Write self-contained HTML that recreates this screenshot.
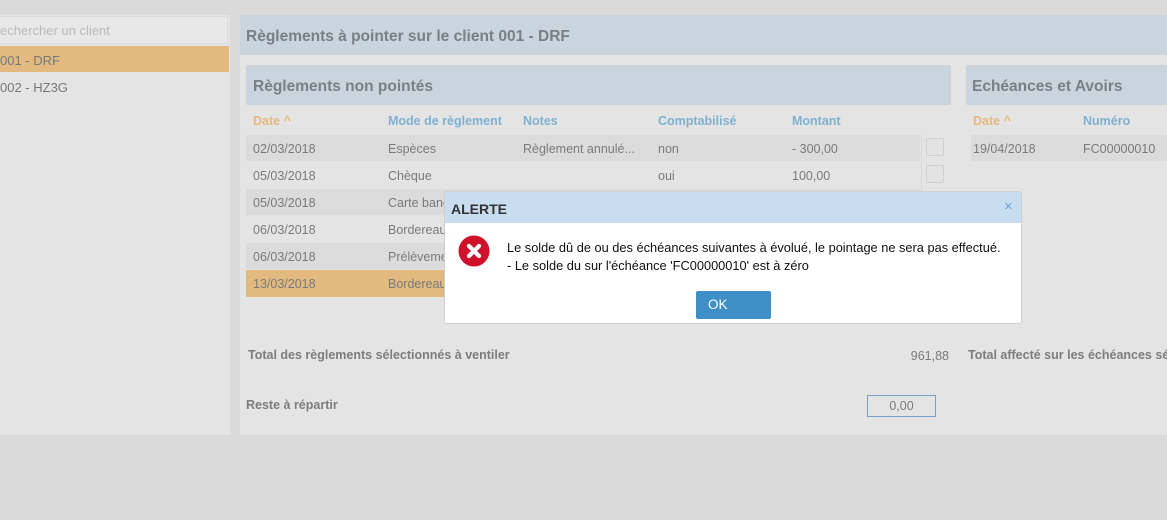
<!DOCTYPE html>
<html><head><meta charset="utf-8"><style>
*{margin:0;padding:0;box-sizing:border-box}
html,body{width:1167px;height:520px;overflow:hidden}
body{background:#dadada;font-family:"Liberation Sans",sans-serif;position:relative;color:#7a7a7a;font-size:12.5px}
#w{position:absolute;left:0;top:0;width:1167px;height:520px;overflow:hidden}
.a{position:absolute;white-space:nowrap}
.h{font-size:15.5px;font-weight:bold;color:#7a7f85}
.ch{color:#7fb0cf;font-weight:bold;font-size:12.5px}
.or{color:#e5b77a}
.cb{position:absolute;width:18px;height:18px;background:#e3e3e3;border:1px solid #cfcfcf;border-radius:2px}
</style></head><body><div id="w">
<div class="a" style="left:0;top:15px;width:230px;height:420px;background:#e4e4e4"></div>
<div class="a" style="left:0;top:16px;width:228px;height:28px;background:#e8e8e8;border:1px solid #d6dde3;border-left:none"></div>
<div class="a" style="left:0;top:23px;color:#b9b9b9;font-size:13px">echercher un client</div>
<div class="a" style="left:0;top:46px;width:229px;height:26px;background:#e2ba80"></div>
<div class="a" style="left:0;top:53px;font-size:13px;color:#777">001 - DRF</div>
<div class="a" style="left:0;top:80px;font-size:13px;color:#777">002 - HZ3G</div>
<div class="a" style="left:240px;top:15px;width:927px;height:420px;background:#e4e4e4"></div>
<div class="a" style="left:240px;top:15px;width:927px;height:40px;background:#c9d4dd"></div>
<div class="a h" style="left:246px;top:28px">Règlements à pointer sur le client 001 - DRF</div>
<div class="a" style="left:246px;top:65px;width:705px;height:40px;background:#c9d4dd;border-radius:2px"></div>
<div class="a h" style="left:253px;top:78px">Règlements non pointés</div>
<div class="a" style="left:966px;top:65px;width:201px;height:40px;background:#c9d4dd;border-radius:2px"></div>
<div class="a h" style="left:972px;top:78px">Echéances et Avoirs</div>
<div class="a ch or" style="left:253px;top:114px">Date ^</div>
<div class="a ch" style="left:388px;top:114px">Mode de règlement</div>
<div class="a ch" style="left:523px;top:114px">Notes</div>
<div class="a ch" style="left:658px;top:114px">Comptabilisé</div>
<div class="a ch" style="left:792px;top:114px">Montant</div>
<div class="a ch or" style="left:973px;top:114px">Date ^</div>
<div class="a ch" style="left:1083px;top:114px">Numéro</div>
<div class="a" style="left:921px;top:135px;width:1px;height:160px;background:#d8d8d8"></div>
<div class="a" style="left:246px;top:135px;width:674px;height:26px;background:#dbdbdb"></div>
<div class="a" style="left:246px;top:189px;width:674px;height:26px;background:#dbdbdb"></div>
<div class="a" style="left:246px;top:243px;width:674px;height:26px;background:#dbdbdb"></div>
<div class="a" style="left:246px;top:270px;width:674px;height:27px;background:#e2ba80"></div>
<div class="a" style="left:253px;top:142px">02/03/2018</div><div class="a" style="left:388px;top:142px">Espèces</div><div class="a" style="left:523px;top:142px">Règlement annulé...</div><div class="a" style="left:658px;top:142px">non</div><div class="a" style="left:792px;top:142px">- 300,00</div>
<div class="a" style="left:253px;top:169px">05/03/2018</div><div class="a" style="left:388px;top:169px">Chèque</div><div class="a" style="left:658px;top:169px">oui</div><div class="a" style="left:792px;top:169px">100,00</div>
<div class="a" style="left:253px;top:196px">05/03/2018</div><div class="a" style="left:388px;top:196px">Carte bancaire</div>
<div class="a" style="left:253px;top:223px">06/03/2018</div><div class="a" style="left:388px;top:223px">Bordereau</div>
<div class="a" style="left:253px;top:250px">06/03/2018</div><div class="a" style="left:388px;top:250px">Prélèvement</div>
<div class="a" style="left:253px;top:277px">13/03/2018</div><div class="a" style="left:388px;top:277px">Bordereau</div>
<div class="cb" style="left:926px;top:138px"></div>
<div class="cb" style="left:926px;top:165px"></div>
<div class="a" style="left:971px;top:135px;width:196px;height:26px;background:#dbdbdb"></div>
<div class="a" style="left:973px;top:142px">19/04/2018</div><div class="a" style="left:1083px;top:142px">FC00000010</div>
<div class="a" style="left:248px;top:348px;font-weight:bold;color:#7d7d7d">Total des règlements sélectionnés à ventiler</div>
<div class="a" style="left:893px;top:349px;width:56px;text-align:right">961,88</div>
<div class="a" style="left:968px;top:348px;width:199px;overflow:hidden;font-weight:bold;color:#7d7d7d">Total affecté sur les échéances sélectionnées</div>
<div class="a" style="left:246px;top:398px;font-weight:bold;color:#7d7d7d">Reste à répartir</div>
<div class="a" style="left:867px;top:395px;width:69px;height:22px;border:1px solid #7aa0c8;text-align:center;line-height:21px">0,00</div>
<div class="a" style="left:444px;top:191px;width:578px;height:133px;background:#fff;border:1px solid #cfcfcf;border-radius:3px;overflow:hidden">
 <div style="height:31px;background:#c8ddf0;position:relative">
  <div class="a" style="left:6px;top:9px;font-weight:bold;font-size:14px;color:#333">ALERTE</div>
  <div class="a" style="left:559px;top:6px;font-size:15px;color:#6aa4d6">×</div>
 </div>
 <svg class="a" style="left:13px;top:43px" width="32" height="32" viewBox="0 0 32 32"><circle cx="16" cy="16" r="15.5" fill="#d0112b"/><path d="M11 11L21 21M21 11L11 21" stroke="#fff" stroke-width="4.2" stroke-linecap="round"/></svg>
 <div class="a" style="left:62px;top:47px;font-size:12.8px;color:#111;line-height:18px">Le solde dû de ou des échéances suivantes à évolué, le pointage ne sera pas effectué.<br>- Le solde du sur l'échéance 'FC00000010' est à zéro</div>
 <div class="a" style="left:251px;top:99px;width:75px;height:28px;background:#3d8fc6;border-radius:2px;color:#fff;font-size:13.5px;line-height:28px;padding-left:12px">OK</div>
</div>
</div></body></html>
